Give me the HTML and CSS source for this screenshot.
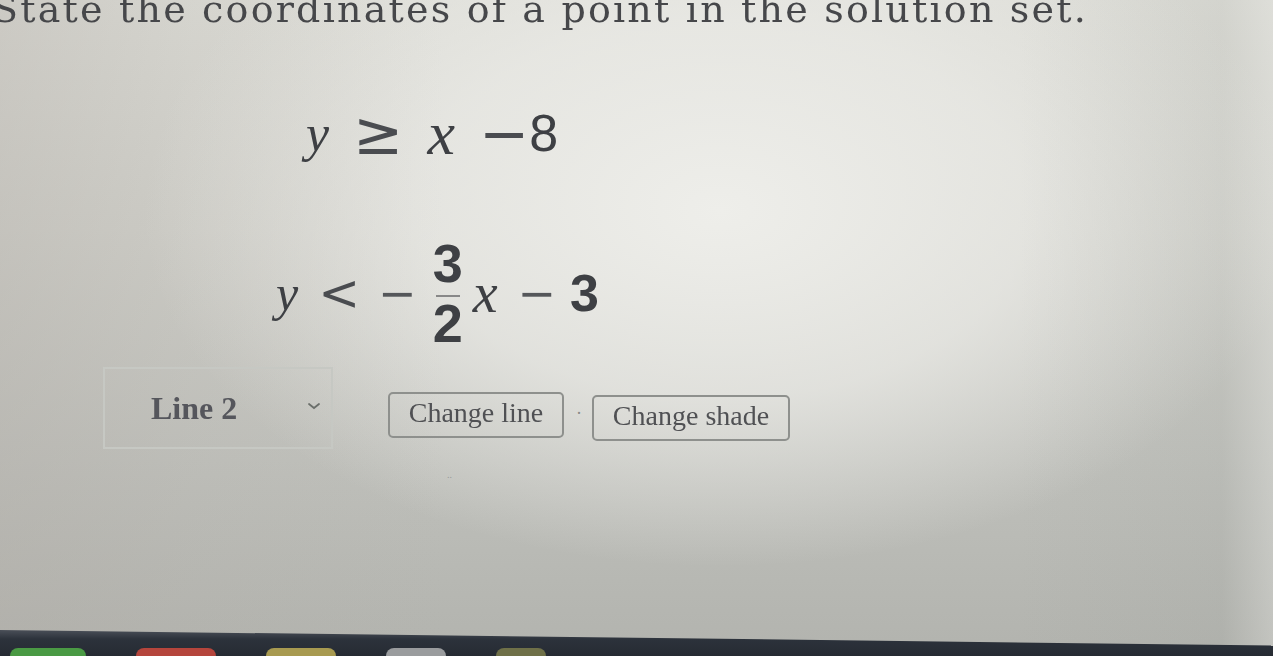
FILE: index.html
```html
<!DOCTYPE html>
<html>
<head>
<meta charset="utf-8">
<link rel="stylesheet" href="styles.css">
</head>
<body>
<div class="screen">
  <p class="prompt">State the coordinates of a point in the solution set.</p>
  <div class="eq eq1">
    <span class="v">y</span><span class="op ge">≥</span><span class="v vx">x</span><span class="op minus">−</span><span class="num">8</span>
  </div>
  <div class="eq eq2">
    <span class="v">y</span><span class="op lt">&lt;</span><span class="op minus2">−</span>
    <span class="frac"><span class="fn">3</span><span class="fbar"></span><span class="fd">2</span></span>
    <span class="v vx">x</span><span class="op minus">−</span><span class="num">3</span>
  </div>
  <div class="controls">
    <div class="select">
      <span class="sel-text">Line 2</span>
      <svg class="chev" width="14" height="8" viewBox="0 0 14 8"><path d="M2 2 L7 6 L12 2" fill="none" stroke="#6a6e6a" stroke-width="1.8" stroke-linecap="round"/></svg>
    </div>
    <button class="btn btn1">Change line</button>
    <span class="dot">·</span>
    <button class="btn btn2">Change shade</button>
  </div>
  <div class="spacer"><span class="mark">..</span></div>
  <div class="taskbar">
    <span class="pill green"></span><span class="pill red"></span><span class="pill yellow"></span><span class="pill gray"></span><span class="pill olive"></span>
  </div>
</div>
</body>
</html>
```
FILE: styles.css
```css
* { box-sizing: border-box; }
html, body { margin: 0; padding: 0; width: 1273px; height: 656px; overflow: hidden; }
body {
  background:
    linear-gradient(90deg, rgba(175,170,164,0.35) 0%, rgba(175,170,164,0.15) 15%, rgba(0,0,0,0) 35%, rgba(0,0,0,0) 80%, rgba(150,155,150,0.12) 96%, rgba(225,226,222,0.35) 100%),
    radial-gradient(ellipse 680px 420px at 720px 210px, rgba(238,238,234,1) 0%, rgba(236,236,232,0.7) 45%, rgba(236,236,232,0) 85%),
    linear-gradient(180deg, #dcdcd6 0%, #d0d0ca 35%, #bfc0bb 70%, #b2b3ae 100%);
}
.screen { height: 656px; display: flex; flex-direction: column; position: relative; }
.prompt {
  margin: -14px 0 0 -8px;
  font-family: "DejaVu Serif", serif;
  font-size: 38px;
  letter-spacing: 2.2px;
  color: #46474a;
  white-space: nowrap;
  filter: blur(0.7px);
  height: 40px;
  line-height: 46px;
}
.eq {
  font-family: "Liberation Sans", sans-serif;
  color: #3e4044;
  display: flex;
  align-items: center;
  filter: blur(0.6px);
}
.eq .op { font-family: "DejaVu Sans", sans-serif; }
.eq .v { font-style: italic; font-family: "Liberation Serif", serif; }
.eq1 { margin: 77px 0 0 306px; font-size: 52px; height: 60px; }
.eq1 .ge { margin: 0 24px 0 24px; font-size: 60px; color: #4a4c50; }
.eq1 .vx { font-size: 62px; }
.eq1 .minus { margin: 0 0 0 24px; font-size: 60px; color: #4a4c50; }
.eq1 .num { font-size: 52px; margin-left: 0; }
.eq2 { margin: 75px 0 0 276px; font-size: 50px; height: 110px; }
.eq2 .lt { margin: 0 18px 0 20px; font-size: 50px; color: #4a4c50; }
.eq2 .minus2 { font-size: 46px; color: #55575a; margin-right: 16px; }
.eq2 .minus { margin: 0 14px 0 20px; font-size: 46px; color: #55575a; }
.eq2 .num { font-weight: bold; font-size: 52px; }
.eq2 .vx { font-size: 56px; }
.frac { display: flex; flex-direction: column; align-items: center; margin: 0 10px 0 0; }
.fn, .fd { font-weight: bold; font-size: 54px; line-height: 44px; }
.fn { margin-bottom: 10px; }
.fd { margin-top: 4px; }
.fbar { width: 24px; height: 2px; background: #888; }
.controls { display: flex; align-items: flex-start; margin: 19px 0 0 103px; }
.select {
  width: 230px; height: 82px;
  border: 2px solid #c6c8c3;
  display: flex; align-items: center; justify-content: space-between;
  padding: 0 10px 0 46px;
}
.sel-text { font-family: "Liberation Serif", serif; font-weight: bold; font-size: 32px; color: #55565c; filter: blur(0.6px); }
.chev { margin-top: -4px; }
.btn {
  font-family: "Liberation Serif", serif;
  font-size: 28px;
  color: #505154;
  background: transparent;
  border: 2px solid #8e908d;
  border-radius: 5px;
  height: 46px;
  padding: 0 0 4px 0;
  filter: blur(0.5px);
}
.btn1 { margin: 25px 0 0 55px; width: 176px; }
.dot { color: #8a8a88; font-size: 18px; margin: 36px 10px 0 12px; }
.btn2 { width: 198px; margin-top: 28px; }
.spacer { flex: 1; position: relative; }
.mark { position: absolute; left: 447px; top: 20px; color: #999; font-size: 10px; line-height: 12px; }
.taskbar {
  height: 26px;
  background: linear-gradient(180deg, #4a4f58 0%, #2c323b 35%, #262b33 100%);
  clip-path: polygon(0 0, 100% 60%, 100% 100%, 0 100%);
  display: flex; align-items: flex-end; gap: 50px; padding-left: 10px;
}
.pill { width: 76px; height: 8px; border-radius: 8px 8px 0 0; }
.green { background: #4a9a44; }
.red { background: #b5453c; width: 80px; }
.yellow { background: #a89a50; width: 70px; }
.gray { background: #9a9c9e; width: 60px; }
.olive { background: #6f7048; width: 50px; }
```
